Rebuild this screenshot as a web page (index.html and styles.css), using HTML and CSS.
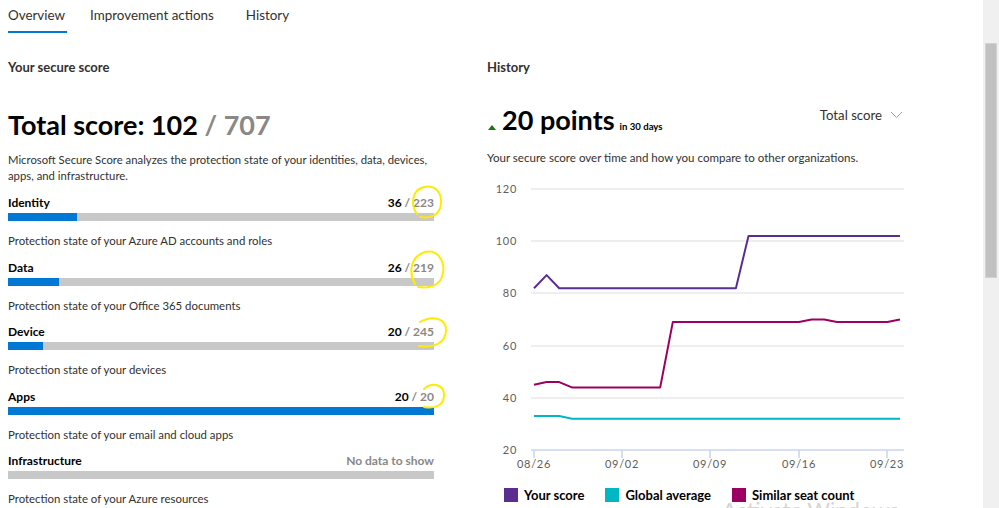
FILE: index.html
```html
<!DOCTYPE html>
<html lang="en">
<head>
<meta charset="UTF-8">
<meta name="viewport" content="width=device-width, initial-scale=1.0">
<title>Microsoft Secure Score</title>
<link rel="stylesheet" href="styles.css">
</head>
<body>
<div class="page">
  <main class="content">
    <nav class="tabs">
      <a class="tab active">Overview</a>
      <a class="tab">Improvement actions</a>
      <a class="tab">History</a>
    </nav>

    <div class="columns">
      <!-- left: score breakdown per area -->
      <section class="score-col">
        <h2 class="section-title">Your secure score</h2>
        <div class="total">Total score: 102 <span class="total-max">/ 707</span></div>
        <p class="intro">Microsoft Secure Score analyzes the protection state of your identities, data, devices, apps, and infrastructure.</p>

        <div class="area">
          <div class="area-head"><span>Identity</span><span>36 <span class="max">/ 223</span></span></div>
          <div class="bar"><div class="fill" style="width:16.14%"></div></div>
          <p class="area-desc">Protection state of your Azure AD accounts and roles</p>
        </div>
        <div class="area">
          <div class="area-head"><span>Data</span><span>26 <span class="max">/ 219</span></span></div>
          <div class="bar"><div class="fill" style="width:11.87%"></div></div>
          <p class="area-desc">Protection state of your Office 365 documents</p>
        </div>
        <div class="area">
          <div class="area-head"><span>Device</span><span>20 <span class="max">/ 245</span></span></div>
          <div class="bar"><div class="fill" style="width:8.16%"></div></div>
          <p class="area-desc">Protection state of your devices</p>
        </div>
        <div class="area">
          <div class="area-head"><span>Apps</span><span>20 <span class="max">/ 20</span></span></div>
          <div class="bar"><div class="fill" style="width:100%"></div></div>
          <p class="area-desc">Protection state of your email and cloud apps</p>
        </div>
        <div class="area">
          <div class="area-head"><span>Infrastructure</span><span class="no-data">No data to show</span></div>
          <div class="bar"></div>
          <p class="area-desc">Protection state of your Azure resources</p>
        </div>
      </section>

      <!-- right: score history chart -->
      <section class="history-col">
        <h2 class="section-title">History</h2>
        <div class="trend-row">
          <div class="trend">
            <span class="up-arrow"></span>
            <span class="trend-value">20 points</span>
            <span class="trend-period">in 30 days</span>
          </div>
          <div class="dropdown">Total score
            <svg class="chevron" width="13" height="8" viewBox="0 0 13 8"><path d="M1 1 L6.5 6.5 L12 1" fill="none" stroke="#a19f9d" stroke-width="1"/></svg>
          </div>
        </div>
        <p class="history-desc">Your secure score over time and how you compare to other organizations.</p>

        <svg class="chart" width="417" height="300" viewBox="0 0 417 300">
          <g class="grid" stroke="#e9e9e9" stroke-width="1.5">
            <line x1="44" y1="9" x2="417" y2="9"/>
            <line x1="44" y1="61" x2="417" y2="61"/>
            <line x1="44" y1="113" x2="417" y2="113"/>
            <line x1="44" y1="166" x2="417" y2="166"/>
            <line x1="44" y1="218" x2="417" y2="218"/>
          </g>
          <g stroke="#c8d4ef" stroke-width="1.5">
            <line x1="44" y1="270" x2="417" y2="270"/>
            <line x1="47" y1="270" x2="47" y2="278"/>
            <line x1="135" y1="270" x2="135" y2="278"/>
            <line x1="223" y1="270" x2="223" y2="278"/>
            <line x1="312" y1="270" x2="312" y2="278"/>
            <line x1="400" y1="270" x2="400" y2="278"/>
          </g>
          <g class="axis-text" text-anchor="end">
            <text x="30" y="13">120</text>
            <text x="30" y="65">100</text>
            <text x="30" y="117">80</text>
            <text x="30" y="170">60</text>
            <text x="30" y="222">40</text>
            <text x="30" y="274">20</text>
          </g>
          <g class="axis-text" text-anchor="middle">
            <text x="47" y="288">08/26</text>
            <text x="135" y="288">09/02</text>
            <text x="223" y="288">09/09</text>
            <text x="312" y="288">09/16</text>
            <text x="400" y="288">09/23</text>
          </g>
          <g fill="none" stroke-width="2" stroke-linejoin="round">
            <polyline stroke="#00b7c3" points="47,236.1 72.2,236.1 84.9,238.7 413,238.7"/>
            <polyline stroke="#9b0062" points="47,204.8 59.6,202.1 72.2,202.1 84.9,207.4 173.2,207.4 185.8,142.1 312,142.1 324.6,139.5 337.3,139.5 349.9,142.1 400.4,142.1 413,139.5"/>
            <polyline stroke="#5c2d91" points="47,108.2 59.6,95.1 72.2,108.2 248.9,108.2 261.5,56 413,56"/>
          </g>
        </svg>

        <div class="legend">
          <span class="legend-item"><i class="swatch purple"></i>Your score</span>
          <span class="legend-item"><i class="swatch teal"></i>Global average</span>
          <span class="legend-item"><i class="swatch magenta"></i>Similar seat count</span>
        </div>
      </section>
    </div>
  </main>
  <div class="scrollbar"><div class="thumb"></div></div>
</div>

<!-- highlighter circles drawn over the max values -->
<svg class="marks" width="999" height="508" viewBox="0 0 999 508">
  <g fill="none" stroke="#ffeb00" stroke-width="2" stroke-linecap="round">
    <path d="M417,214 C410,204 412,190 424,187 C436,184 442,194 441,204 C440,214 432,219 420,217"/>
    <path d="M415,284 C408,272 411,256 425,252 C438,249 445,262 443,273 C441,284 432,289 418,287"/>
    <path d="M420,322 C432,315 446,318 446,330 C446,342 436,348 419,346"/>
    <path d="M424,389 C432,382 444,384 444,395 C444,405 436,409 424,407"/>
  </g>
</svg>
<div class="watermark">Activate Windows</div>
</body>
</html>
```

FILE: styles.css
```css
body {
    margin: 0;
    font-family: Lato, "Noto Sans", sans-serif;
    color: #323130;
    background-color: #fff;
    overflow: hidden;
}

.page {
    display: flex;
    height: 508px;
}

.content {
    flex: 1;
    padding-left: 8px;
}

/* fake window scrollbar */
.scrollbar {
    width: 16px;
    background-color: #f0f0f0;
}

.thumb {
    margin: 43px 2px 0 2px;
    height: 235px;
    background-color: #c1c1c1;
    border: 1px solid #d2d2d2;
    box-sizing: border-box;
}

.tabs {
    display: flex;
    height: 33px;
}

.tab {
    font-size: 13.4px;
    line-height: 31px;
    border-bottom: 2px solid transparent;
    margin-right: 32px;
    color: #323130;
}

.tab.active {
    border-bottom-color: #0078d4;
    padding-right: 2px;
    margin-right: 23px;
}

.columns {
    display: flex;
    gap: 53px;
}

.score-col {
    width: 426px;
}

.history-col {
    width: 417px;
}

.section-title {
    margin: 26px 0 0 0;
    font-size: 13px;
    line-height: 16px;
    font-weight: 700;
}

.total {
    margin-top: 34px;
    font-size: 27px;
    line-height: 32px;
    font-weight: 700;
    color: #000;
}

.total-max {
    color: #8a8886;
}

.intro {
    margin: 11px 0 0 0;
    font-size: 11.3px;
    line-height: 16px;
}

.area {
    margin-top: 11px;
}

.area + .area {
    margin-top: 10.5px;
}

.area-head {
    display: flex;
    justify-content: space-between;
    font-size: 12px;
    line-height: 16px;
    font-weight: 700;
    color: #000;
}

.area-head .max {
    color: #8a8886;
}

.no-data {
    color: #8a8886;
}

.bar {
    margin-top: 2px;
    height: 8px;
    background-color: #c8c8c8;
}

.fill {
    height: 100%;
    background-color: #0078d4;
}

.area-desc {
    margin: 12px 0 0 0;
    font-size: 11.4px;
    line-height: 16px;
}

.trend-row {
    display: flex;
    justify-content: space-between;
    align-items: flex-start;
    margin-top: 29px;
}

.trend {
    display: flex;
    align-items: baseline;
}

.up-arrow {
    width: 0;
    height: 0;
    border-left: 4px solid transparent;
    border-right: 4px solid transparent;
    border-bottom: 5px solid #107c10;
    margin: 0 6px 0 1px;
}

.trend-value {
    font-size: 27px;
    line-height: 32px;
    font-weight: 700;
    color: #000;
}

.trend-period {
    margin-left: 5px;
    font-size: 9.6px;
    font-weight: 700;
    color: #000;
}

.dropdown {
    margin-top: 2px;
    margin-right: 1px;
    font-size: 13.2px;
    line-height: 18px;
    display: flex;
    align-items: center;
    gap: 8px;
}

.history-desc {
    margin: 14px 0 0 0;
    font-size: 11.55px;
    line-height: 16px;
}

.chart {
    display: block;
    margin-top: 14px;
}

.axis-text {
    font-size: 11px;
    fill: #605e5c;
    letter-spacing: 0.7px;
}

.legend {
    display: flex;
    gap: 21px;
    margin-top: 7px;
    padding-left: 17px;
    font-size: 13px;
    line-height: 16px;
    font-weight: 700;
    color: #000;
}

.legend-item {
    display: flex;
    align-items: center;
    gap: 6px;
}

.swatch {
    width: 14px;
    height: 14px;
}

.purple { background-color: #5c2d91; }
.teal { background-color: #00b7c3; }
.magenta { background-color: #9b0062; }

.marks {
    position: absolute;
    top: 0;
    left: 0;
    pointer-events: none;
}

.watermark {
    position: absolute;
    left: 722px;
    top: 499px;
    font-size: 22px;
    line-height: 22px;
    color: #d4d4d4;
    pointer-events: none;
}
```
